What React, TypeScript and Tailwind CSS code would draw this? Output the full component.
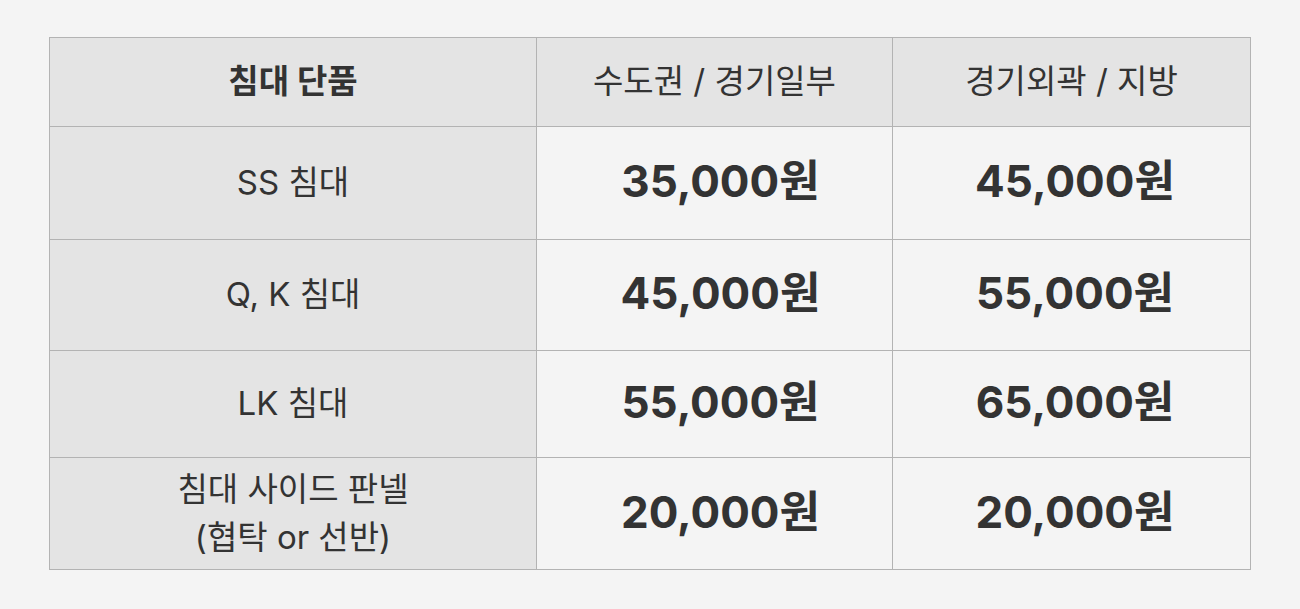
import React from "react";

const rows = [
  { name: ["SS 침대"], a: "35,000원", b: "45,000원", h: "h-[112px]" },
  { name: ["Q, K 침대"], a: "45,000원", b: "55,000원", h: "h-[110px]" },
  { name: ["LK 침대"], a: "55,000원", b: "65,000원", h: "h-[106px]" },
  { name: ["침대 사이드 판넬", "(협탁 or 선반)"], a: "20,000원", b: "20,000원", h: "h-[111px]" },
];

export default function App() {
  const font = { fontFamily: 'Inter, "Noto Sans CJK KR", sans-serif' };
  return (
    <div className="w-[1300px] h-[609px] bg-[#f4f4f4] pt-[37px] pl-[49px]" style={font}>
      <div className="w-[1202px] border border-[#b3b3b3] bg-[#b3b3b3] grid grid-cols-[486px_355px_357px] gap-px text-[#333333]">
        <div className="h-[88px] bg-[#e4e4e4] flex items-center justify-center text-[33px] font-bold">침대 단품</div>
        <div className="h-[88px] bg-[#e4e4e4] flex items-center justify-center text-[33px]">수도권 / 경기일부</div>
        <div className="h-[88px] bg-[#e4e4e4] flex items-center justify-center text-[33px]">경기외곽 / 지방</div>
        {rows.map((r, i) => (
          <React.Fragment key={i}>
            <div className={`${r.h} bg-[#e4e4e4] flex flex-col items-center justify-center text-[33px] leading-[48px] pb-[2px]`}>
              {r.name.map((n, j) => (
                <span key={j}>{n}</span>
              ))}
            </div>
            <div className={`${r.h} bg-[#f4f4f4] flex items-center justify-center pl-[12px] pb-[4px] text-[44px] font-bold`}>{r.a}</div>
            <div className={`${r.h} bg-[#f4f4f4] flex items-center justify-center pl-[7px] pb-[4px] text-[44px] font-bold`}>{r.b}</div>
          </React.Fragment>
        ))}
      </div>
    </div>
  );
}
